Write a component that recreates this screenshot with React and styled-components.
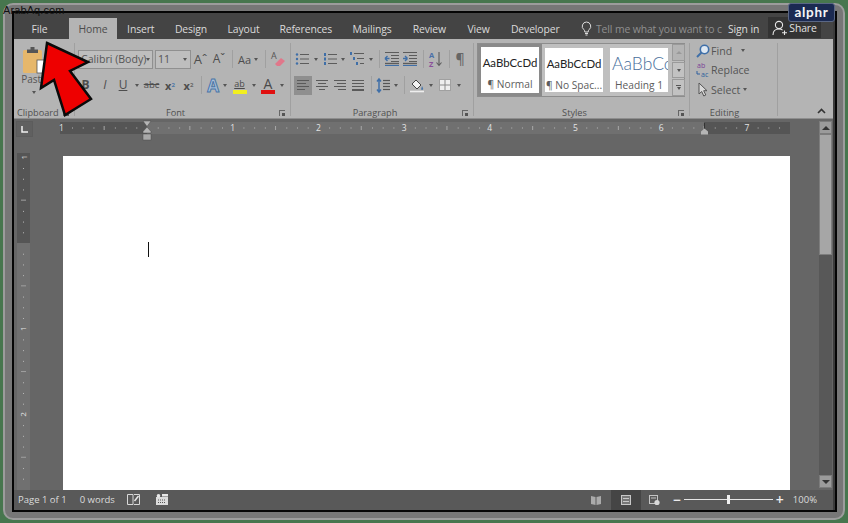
import React from "react";
import styled, { createGlobalStyle } from "styled-components";

const UI = `"Open Sans", "Noto Sans", "Liberation Sans", sans-serif`;

const Global = createGlobalStyle`
  html, body { margin: 0; padding: 0; background: #47764e; }
  #root { width: 848px; height: 523px; overflow: hidden; }
  * { box-sizing: border-box; }
`;

const Shot = styled.div`
  position: relative; width: 848px; height: 523px; padding: 3px;
  background: #47764e; font-family: ${UI}; overflow: hidden;
`;
const Bezel = styled.div`
  width: 842px; height: 517px; padding: 6px 6px 6px 7px; border: 2px solid #9c9c9c;
  border-radius: 10px; background: #777;
`;
const Win = styled.div`
  width: 825px; height: 501px; border: 2px solid #050505; padding-right: 2px;
  background: #3c3c3c; display: flex; flex-direction: column;
`;

/* ---------- tabs ---------- */
const TabBar = styled.div`
  height: 26px; flex: none; background: #444; display: flex; align-items: flex-end;
  font-size: 10.4px; letter-spacing: -.12px;
`;
const Tab = styled.div`
  width: ${p => p.$w}px; height: 21px; margin-right: ${p => p.$mr ?? 0}px; flex: none; display: flex; align-items: center;
  justify-content: center; white-space: nowrap;
  color: ${p => (p.$on ? "#4c4c4c" : "#dadada")};
  background: ${p => (p.$on ? "#b4b4b4" : "transparent")};
`;
const TellMe = styled.div`
  width: 158px; height: 21px; flex: none; display: flex; align-items: center; gap: 4px;
  padding-left: 11px; color: #8f8f8f; white-space: nowrap;
`;
const SignIn = styled.div`
  width: 40px; height: 21px; flex: none; display: flex; align-items: center;
  color: #dedede; white-space: nowrap;
`;
const ShareBox = styled.div`
  width: 53px; height: 21px; margin-bottom: 1px; padding-top: 1px; flex: none; background: #333; display: flex; align-items: center;
  justify-content: center; gap: 1px; color: #e2e2e2;
`;

/* ---------- ribbon ---------- */
const Ribbon = styled.div`
  height: 80px; flex: none; background: #b4b4b4; display: flex;
  border-bottom: 1px solid #8e8e8e; position: relative;
`;
const Group = styled.section`
  width: ${p => p.$w}px; flex: none; margin: 4px 0 2px; display: flex; flex-direction: column;
  border-right: 1px solid #a0a0a0;
`;
const GroupBody = styled.div`
  height: 63px; flex: none; padding-top: ${p => p.$top ?? 7}px; display: flex; flex-direction: column;
  gap: ${p => p.$gap ?? 8}px;
`;
const GroupFoot = styled.div`
  flex: 1; display: grid; grid-template-columns: ${p => p.$clip ? "auto 1fr auto" : "1fr auto 1fr"}; align-items: center;
  font-size: 9.2px; color: #505050; padding: 0 5px 0 3px; white-space: nowrap;
`;
const FootLabel = styled.span` margin-right: ${p => p.$mr ?? 12}px; `;
const Launcher = styled.span`
  justify-self: end; width: 6px; height: 6px; border: 1px solid #666; border-width: 1px 0 0 1px;
  position: relative;
  &::after { content: ""; position: absolute; right: 0; bottom: 0; width: 3px; height: 3px; background: #555; }
`;
const Row = styled.div`
  height: 18px; display: flex; align-items: center; padding-left: ${p => p.$pad ?? 0}px; color: #555;
`;
const Cell = styled.span`
  width: ${p => p.$w}px; height: ${p => p.$h ?? 19}px; flex: none; display: flex; align-items: center;
  justify-content: center; font-size: ${p => p.$fs ?? 12}px; line-height: 1; color: #4d4d4d;
  font-weight: ${p => p.$fw ?? 400}; font-style: ${p => p.$it ? "italic" : "normal"};
  text-decoration: ${p => p.$deco ?? "none"};
  background: ${p => p.$on ? "#8f8f8f" : "transparent"};
`;
const Sep = styled.span`
  width: ${p => p.$w}px; height: 18px; flex: none; display: flex; justify-content: center;
  &::after { content: ""; width: 1px; height: 100%; background: #a0a0a0; }
`;
const Caret = styled.i`
  display: block; flex: none; width: 0; height: 0; border-left: 2.5px solid transparent; border-right: 2.5px solid transparent;
  border-top: 3px solid ${p => p.$c ?? "#555"};
`;
const Combo = styled.div`
  width: ${p => p.$w}px; height: 19px; margin-right: ${p => p.$mr ?? 0}px; flex: none; border: 1px solid #909090; background: #bebebe;
  display: flex; align-items: center; justify-content: space-between; padding: 0 3px 0 2px;
  color: #555; font-size: 10.6px; white-space: nowrap; overflow: hidden;
`;
const Script = styled.sub`
  font-size: 6px; color: ${p => p.$c ?? "#666"}; vertical-align: ${p => p.$up ? "6px" : "-3px"};
`;
const BarLetter = styled.span`
  display: flex; flex-direction: column; align-items: center; gap: 0; font-size: 14px; line-height: 13px; color: #4a4a4a;
  &::after { content: ""; width: 14px; height: 4px; background: ${p => p.$c}; }
`;
const AbLetter = styled(BarLetter)`
  font-size: 9px; line-height: 13px; text-decoration: underline;
`;
const Effects = styled.span`
  font-size: 17px; font-weight: 700; line-height: 1; color: #a8bfd8; -webkit-text-stroke: 1px #4b77a8;
`;

/* paste */
const PasteCol = styled.div`
  width: 40px; padding-top: 2px; display: flex; flex-direction: column; align-items: center;
  color: #555; font-size: 10px; line-height: 13px;
`;
const PasteCaret = styled(Caret)` margin-top: 5px; `;
const SmallTools = styled.div`
  width: 6px; height: 8px; margin: 44px 0 0 4px; background: #d6a860;
`;
const ClipRow = styled.div` display: flex; `;

/* styles gallery */
const Gallery = styled.div`
  width: 208px; height: 54px; margin-left: 3px; border: 1px solid #8d8d8d; background: #bfbfbf;
  display: flex; align-items: center;
`;
const Tile = styled.div`
  width: ${p => p.$sel ? 64 : 58}px; height: ${p => p.$sel ? 52 : 44}px; flex: none;
  margin-left: ${p => p.$ml}px; background: #fff; border: ${p => p.$sel ? "3px solid #8a8a8a" : "none"};
  display: flex; flex-direction: column; align-items: center; overflow: hidden;
`;
const TileSample = styled.div`
  height: 29px; width: 100%; padding-top: 2px; display: flex; align-items: center; justify-content: ${p => p.$head ? "flex-start" : "center"};
  padding-left: ${p => p.$head ? "2px" : 0}; overflow: hidden; white-space: nowrap;
  font-family: Lato, "Liberation Sans", sans-serif; font-size: ${p => p.$head ? "17.5px" : "11.4px"};
  font-weight: ${p => p.$head ? 300 : 400};
  color: ${p => p.$head ? "#4a6f9c" : "#222"};
`;
const TileName = styled.div`
  font-size: 10.2px; line-height: 14px; color: #5c5c5c; white-space: nowrap; padding-top: 1px;
`;
const GalleryArrows = styled.div`
  width: 13px; height: 52px; margin-left: 4px; flex: none; display: flex; flex-direction: column; gap: 1px;
`;
const ArrowBtn = styled.div`
  flex: 1; border: 1px solid #9a9a9a; background: ${p => p.$off ? "#b4b4b4" : "#c2c2c2"};
  display: flex; align-items: center; justify-content: center; flex-direction: column; gap: 1px;
`;
const DashCaret = styled.i` display: block; width: 5px; height: 1px; background: #555; `;
const FadedUp = styled.i`
  display: block; width: 0; height: 0; border-left: 3px solid transparent; border-right: 3px solid transparent;
  border-bottom: 3px solid #999;
`;

/* editing */
const EditList = styled.div`
  display: flex; flex-direction: column; padding: 0 0 0 5px; gap: 4.5px;
`;
const EditRow = styled.div`
  height: 15px; display: flex; align-items: center; font-size: 10.6px; color: #555; white-space: nowrap;
`;
const EditIcon = styled.span` width: 16px; flex: none; display: flex; justify-content: center; `;
const EditCaret = styled.span` margin-left: ${p => p.$ml}px; `;
const Collapse = styled.span`
  position: absolute; right: 7px; bottom: 4px; display: block;
`;

/* ---------- document ---------- */
const Body = styled.div`
  height: 371px; flex: none; display: flex; background: #666;
`;
const Main = styled.div` width: 804px; flex: none; display: flex; flex-direction: column; `;
const RulerRow = styled.div`
  height: 34px; flex: none; display: flex; align-items: flex-start; padding: 2px 0 0 2px;
`;
const Corner = styled.div`
  width: 17px; height: 16px; flex: none; border: 1px solid #5c5c5c; background: #606060;
  display: flex; align-items: center; justify-content: center;
`;
const HRuler = styled.div`
  position: relative; width: 730px; height: 12px; margin: 1px 0 0 27px; flex: none; display: flex;
`;
const RulerPart = styled.div`
  width: ${p => p.$w}px; flex: none; background: ${p => p.$on ? "#707070" : "#555"};
`;
const RulerArt = styled.svg`
  position: absolute; left: 0; top: 0; overflow: visible; pointer-events: none;
`;
const Workspace = styled.div`
  flex: 1; display: flex; align-items: flex-start; padding-left: 3px; min-height: 0;
`;
const VRuler = styled.div`
  position: relative; width: 13px; height: 337px; flex: none; display: flex; flex-direction: column;
`;
const VPart = styled.div`
  height: ${p => p.$h}px; flex: none; background: ${p => p.$on ? "#707070" : "#555"};
`;
const Page = styled.div`
  width: 727px; height: 334px; margin: 3px 0 0 33px; flex: none; background: #fff; padding: 86px 0 0 85px;
`;
const TextCursor = styled.div` width: 1px; height: 15px; background: #111; `;
const ScrollBar = styled.div`
  width: 15px; flex: none; padding: 2px 1px; display: flex; flex-direction: column;
`;
const ScrollBtn = styled.div`
  height: 13px; flex: none; background: #9b9b9b; border: 1px solid #7c7c7c; display: flex; align-items: center; justify-content: center;
`;
const Thumb = styled.div`
  height: 121px; flex: none; background: #a6a6a6; border: 1px solid #7d7d7d;
`;
const Track = styled.div` flex: 1; background: #585858; `;
const UpCaret = styled.i`
  display: block; width: 0; height: 0; border-left: 4px solid transparent; border-right: 4px solid transparent;
  border-bottom: 4px solid #333;
`;
const DownCaret = styled.i`
  display: block; width: 0; height: 0; border-left: 4px solid transparent; border-right: 4px solid transparent;
  border-top: 4px solid #333;
`;

/* ---------- status ---------- */
const Status = styled.div`
  height: 20px; flex: none; background: #595959; display: flex; align-items: center; color: #dcdcdc;
  font-size: 9.5px; white-space: nowrap; padding-bottom: 1px;
`;
const StatusText = styled.span` margin-left: ${p => p.$ml}px; margin-right: ${p => p.$mr ?? 0}px; `;
const StatusIcon = styled.span`
  margin-left: ${p => p.$ml}px; display: flex; align-items: center;
`;
const Spacer = styled.div` flex: 1; `;
const ViewActive = styled.div`
  width: 30px; height: 20px; margin-left: 10px; background: #454545; display: flex; align-items: center; justify-content: center;
`;
const Zoomer = styled.div`
  width: 89px; height: 1px; margin-left: 3px; background: #e4e4e4; display: flex; align-items: center; justify-content: center;
`;
const ZoomKnob = styled.i` display: block; flex: none; width: 3px; height: 9px; background: #f0f0f0; `;
const ZoomSign = styled.span`
  margin-left: ${p => p.$ml}px; font-size: 14px; line-height: 1; color: #f0f0f0; font-weight: 600;
`;

/* ---------- overlays ---------- */
const Watermark = styled.div`
  position: absolute; left: 3px; top: 4px; font: 11px "Liberation Sans", sans-serif; color: #111; letter-spacing: .1px;
`;
const Badge = styled.div`
  position: absolute; left: 788px; top: 3px; width: 47px; height: 19px; border-radius: 3px; background: #1b2a52;
  border: 1px solid #5a6785; color: #f4f4f6; font: 700 13.5px/16px Lato, "Liberation Sans", sans-serif;
  text-align: center; letter-spacing: .7px;
`;
const ArrowArt = styled.svg` position: absolute; left: 0; top: 0; pointer-events: none; `;

/* ---------- drawings ---------- */
const I = ({ w = 14, h = 14, children }) => (
  <svg width={w} height={h} viewBox={`0 0 ${w} ${h}`} style={{ display: "block", overflow: "visible" }}>{children}</svg>
);
const G = "#5c5c5c", B = "#3f6fa8";
const hl = (y, x1, x2, c = G, sw = 1) => <line key={`${y}-${x1}-${x2}`} x1={x1} x2={x2} y1={y + .5} y2={y + .5} stroke={c} strokeWidth={sw} />;

const Bullets = () => <I>{[2, 6.5, 11].map(y => <g key={y}><circle cx="2" cy={y + .5} r="1.2" fill={B} />{hl(y, 5, 14)}</g>)}</I>;
const Numbers = () => <I>{[2, 6.5, 11].map(y => <g key={y}><rect x="1" y={y - 1} width="2" height="3" fill={B} />{hl(y, 5, 14)}</g>)}</I>;
const Multi = () => <I>{[[1, 0], [6, 3], [11, 6]].map(([y, x]) => <g key={y}><rect x={x} y={y - 1} width="2" height="3" fill={B} />{hl(y, x + 4, 14)}</g>)}</I>;
const Indent = ({ flip }) => (
  <I>
    {hl(0, 0, 14)}{hl(11, 0, 14, G, 1.4)}
    {[3, 6, 9].map(y => hl(y, 6, 14))}
    <path d={flip ? "M0 6.5h4.5M0 6.5l2.5-2.5M0 6.5l2.5 2.5" : "M0 6.5h4.5M4.5 6.5l-2.5-2.5M4.5 6.5l-2.5 2.5"} stroke={B} strokeWidth="1.4" fill="none" />
    {hl(13, 0, 14, B, 1)}
  </I>
);
const Sort = () => (
  <I h={16}>
    <text x="0" y="6.5" fontSize="7.5" fontFamily="Open Sans" fontWeight="700" fill="#4a6fa8">A</text>
    <text x="0" y="16" fontSize="7.5" fontFamily="Open Sans" fontWeight="700" fill="#8a4f9a">Z</text>
    <path d="M10 1v13M7.5 11.5l2.5 3 2.5-3" stroke={G} fill="none" strokeWidth="1.1" />
  </I>
);
const Pilcrow = () => <span style={{ fontSize: 14, fontWeight: 600, color: "#666", lineHeight: 1 }}>¶</span>;
const Align = ({ kind }) => {
  const rows = { l: [[1, 13], [1, 10], [1, 13], [1, 9]], c: [[1, 13], [3, 11], [1, 13], [4, 10]], r: [[1, 13], [4, 13], [1, 13], [5, 13]], j: [[1, 13], [1, 13], [1, 13], [1, 13]] }[kind];
  return <I h={11}>{rows.map(([a, b], i) => hl(i * 3, a, b, "#5a5a5a", 1))}{kind === "j" && hl(10, 1, 13, "#5a5a5a")}</I>;
};
const LineSpace = () => (
  <I h={15}>
    <path d="M3 1v13M1 3.5 3 1l2 2.5M1 11.5 3 14l2-2.5" stroke={B} strokeWidth="1.5" fill="none" />
    {[2, 5, 8, 11].map(y => hl(y, 7, 14, "#555", 1.2))}
  </I>
);
const Shading = () => (
  <I h={15}>
    <path d="M2 6 6 2l5 5-4 4z" fill="#f2f2f2" stroke="#444" strokeWidth="1" />
    <path d="M12 8c1 2 1.5 2.5 1 3.5-.6.8-2 .4-1.8-.8z" fill="#4b77a8" />
    {hl(13, 0, 14, "#eee", 1.6)}
  </I>
);
const Borders = () => (
  <I w={12} h={12}><rect width="12" height="12" fill="#eee" /><path d="M6 0v12M0 6h12" stroke="#8a8a8a" strokeWidth="1" /><rect x=".5" y=".5" width="11" height="11" fill="none" stroke="#a0a0a0" /></I>
);
const Eraser = () => (
  <I w={14} h={16}>
    <text x="0" y="8" fontSize="9" fontFamily="Open Sans" fill="#555">A</text>
    <path d="M4 13 10 7l4 3-5 5H6z" fill="#e0778a" />
  </I>
);
const Find = () => <I><circle cx="8.5" cy="5.5" r="4.2" fill="#dfe8f2" stroke="#3f6fa8" strokeWidth="1.6" /><path d="M5.5 8.5 1 13" stroke="#3f6fa8" strokeWidth="2" /></I>;
const Replace = () => (
  <I>
    <text x="1" y="5" fontSize="7" fontFamily="Open Sans" fill="#7b3f98">ab</text>
    <text x="5" y="14" fontSize="7" fontFamily="Open Sans" fill="#2e5f9e">ac</text>
    <path d="M1 8v3h3" stroke="#2e5f9e" fill="none" />
  </I>
);
const Pointer = () => <I><path d="M3 0v11l2.7-2.5L7.8 13l2-1-2.1-4.3H11z" fill="#d9d9d9" stroke="#555" strokeWidth="1" /></I>;
const Paste = () => (
  <I w={26} h={27}>
    <rect x="2" y="4" width="19" height="23" rx="1.5" fill="#e6b76b" />
    <path d="M6 7V3.5h3.5V1h4v2.5H17V7z" fill="#555" />
    <rect x="16" y="14" width="10" height="13" fill="#fff" stroke="#555" strokeWidth=".8" />
  </I>
);
const Bulb = () => <I w={11} h={15}><path d="M5.5 1a4.3 4.3 0 0 0-2.6 7.7c.7.6.9 1.3.9 2.3h3.4c0-1 .2-1.7.9-2.3A4.3 4.3 0 0 0 5.5 1z" fill="none" stroke="#dcdcdc" /><path d="M4 12.5h3M4.5 14h2" stroke="#dcdcdc" /></I>;
const Person = () => <I w={16} h={16}><circle cx="7" cy="5" r="3.6" fill="none" stroke="#e6e6e6" strokeWidth="1.1" /><path d="M1 15c0-4 2.5-6 6-6 1.5 0 2.7.4 3.6 1.1" fill="none" stroke="#e6e6e6" strokeWidth="1.1" /><path d="M12.5 10.5v4.5M10 12.8h5" stroke="#e6e6e6" strokeWidth="1.1" /></I>;
const Up = () => <I w={9} h={6}><path d="M1 5 4.5 1.5 8 5" fill="none" stroke="#333" strokeWidth="1.6" /></I>;
const CornerL = () => <I w={7} h={7}><path d="M1 0v6h6" fill="none" stroke="#f0f0f0" strokeWidth="1.5" /></I>;
const ReadMode = () => <I w={13} h={11}><path d="M.5 .5h5.5v10H.5zM7 .5h5.5v10H7" fill="none" stroke="#d8d8d8" /><path d="M7.5 7 11.5 2" stroke="#e8e8e8" strokeWidth="1.5" /></I>;
const Cal = () => <I w={12} h={11}><rect y="3" width="12" height="8" fill="#dcdcdc" /><circle cx="2.5" cy="1.8" r="1.8" fill="#e8e8e8" /><rect x="6" width="6" height="2.5" fill="#e8e8e8" /><path d="M2 6h8M2 8.5h8" stroke="#555" strokeDasharray="1 1" /></I>;
const Book = () => <I w={10} h={10}><path d="M0 1l4.5 1v8L0 9zM10 1 5.5 2v8l4.5-1z" fill="#aaa" /></I>;
const PrintV = () => <I w={10} h={10}><rect x=".5" y=".5" width="9" height="9" fill="#777" stroke="#c8c8c8" /><path d="M2 3.5h6M2 6.5h6" stroke="#c8c8c8" /></I>;
const WebV = () => <I w={11} h={10}><rect x=".5" y=".5" width="8" height="8" fill="none" stroke="#c4c4c4" /><path d="M2 3h5" stroke="#c4c4c4" /><circle cx="8" cy="7.5" r="2.6" fill="#d8d8d8" /></I>;

const RULER_O = 87, STEP = 85.7 / 8;
const rulerTicks = [];
for (let i = -8; i * STEP + RULER_O < 729; i++) rulerTicks.push(i);

const RulerMarks = () => (
  <RulerArt width="730" height="12">
    {rulerTicks.map(i => {
      const x = RULER_O + i * STEP;
      if (i === 0) return null;
      if (i % 8 === 0) return <text key={i} x={x} y="9" textAnchor="middle" fontSize="8.5" fontFamily="Open Sans" fill="#e4e4e4">{Math.abs(i / 8)}</text>;
      if (i % 4 === 0) return <line key={i} x1={x} x2={x} y1="4" y2="8" stroke="#a8a8a8" />;
      return <rect key={i} x={x} y="5.5" width="1" height="1" fill="#b8b8b8" />;
    })}
    <path d="M83 -1h8l-4 5.5zM83 11v-1.5l4-4.5 4 4.5V11z" fill="#b5b5b5" stroke="#4c4c4c" strokeWidth=".5" />
    <rect x="83" y="12" width="8" height="6" fill="#a9a9a9" stroke="#4c4c4c" strokeWidth=".5" />
    <path d="M644.5 1v7" stroke="#333" />
    <path d="M641 12.5v-3l3.5-3 3.5 3v3z" fill="#b5b5b5" />
  </RulerArt>
);
const V_O = 90;
const vTicks = [];
for (let i = -8; i * STEP + V_O < 336; i++) vTicks.push(i);
const VMarks = () => (
  <RulerArt width="13" height="337">
    {vTicks.map(i => {
      const y = V_O + i * STEP;
      if (i === 0) return null;
      if (i % 8 === 0) return <text key={i} x="6.5" y={y} textAnchor="middle" fontSize="8" fontFamily="Open Sans" fill="#e4e4e4" transform={`rotate(-90 6.5 ${y}) translate(0 3)`}>{Math.abs(i / 8)}</text>;
      if (i % 4 === 0) return <line key={i} x1="4" x2="9" y1={y} y2={y} stroke="#a0a0a0" />;
      return <rect key={i} x="6" y={y} width="1" height="1" fill="#b8b8b8" />;
    })}
  </RulerArt>
);

const TABS = [["File", 51, false, 4], ["Home", 48, true], ["Insert", 47.5], ["Design", 53], ["Layout", 52], ["References", 72.5], ["Mailings", 60], ["Review", 54.5], ["View", 44], ["Developer", 69.5]];

const StyleTile = ({ sample, name, head, sel, ml }) => (
  <Tile $sel={sel} $ml={ml}>
    <TileSample $head={head}>{sample}</TileSample>
    <TileName>{name}</TileName>
  </Tile>
);

export default function App() {
  return (
    <Shot>
      <Global />
      <Bezel>
        <Win>
          <TabBar>
            {TABS.map(([t, w, on, mr]) => <Tab key={t} $w={w} $on={on} $mr={mr}>{t}</Tab>)}
            <TellMe><Bulb /><span>Tell me what you want to c</span></TellMe>
            <SignIn>Sign in</SignIn>
            <ShareBox><Person />Share</ShareBox>
          </TabBar>

          <Ribbon>
            <Group $w={61}>
              <GroupBody $top={1} $gap={0}>
                <ClipRow>
                  <PasteCol><Paste /><span>Paste</span><PasteCaret /></PasteCol>
                  <SmallTools />
                </ClipRow>
              </GroupBody>
              <GroupFoot $clip><span>Clipboard</span><i /><Launcher /></GroupFoot>
            </Group>

            <Group $w={216}>
              <GroupBody>
                <Row $pad={3}>
                  <Combo $w={75} $mr={2}><span>Calibri (Body)</span><Caret /></Combo>
                  <Combo $w={36}><span>11</span><Caret /></Combo>
                  <Cell $w={19} $fs={13}>Aˆ</Cell>
                  <Cell $w={18} $fs={12}>Aˇ</Cell>
                  <Sep $w={8} />
                  <Cell $w={24} $fs={11}>Aa&nbsp;<Caret /></Cell>
                  <Sep $w={10} />
                  <Cell $w={16}><Eraser /></Cell>
                </Row>
                <Row $pad={1}>
                  <Cell $w={19} $fw={700}>B</Cell>
                  <Cell $w={20} $it>I</Cell>
                  <Cell $w={16} $deco="underline">U</Cell>
                  <Cell $w={12}><Caret /></Cell>
                  <Cell $w={17} $fs={9.5} $deco="line-through">abc</Cell>
                  <Cell $w={20} $fw={700} $fs={11}>x<Script $c="#4b77a8">2</Script></Cell>
                  <Cell $w={17} $fw={700} $fs={11}>x<Script $up>2</Script></Cell>
                  <Sep $w={8} />
                  <Cell $w={16}><Effects>A</Effects></Cell>
                  <Cell $w={8}><Caret /></Cell>
                  <Cell $w={21}><AbLetter $c="#f2ef1f">ab</AbLetter></Cell>
                  <Cell $w={8}><Caret /></Cell>
                  <Cell $w={20}><BarLetter $c="#e01010">A</BarLetter></Cell>
                  <Cell $w={8}><Caret /></Cell>
                </Row>
              </GroupBody>
              <GroupFoot><i /><FootLabel>Font</FootLabel><Launcher /></GroupFoot>
            </Group>

            <Group $w={183}>
              <GroupBody>
                <Row $pad={2}>
                  <Cell $w={18}><Bullets /></Cell><Cell $w={10}><Caret /></Cell>
                  <Cell $w={18}><Numbers /></Cell><Cell $w={8}><Caret /></Cell>
                  <Cell $w={20}><Multi /></Cell><Cell $w={8}><Caret /></Cell>
                  <Sep $w={8} />
                  <Cell $w={18}><Indent flip /></Cell><Cell $w={18}><Indent /></Cell>
                  <Sep $w={8} />
                  <Cell $w={18}><Sort /></Cell>
                  <Sep $w={8} />
                  <Cell $w={14}><Pilcrow /></Cell>
                </Row>
                <Row $pad={3}>
                  <Cell $w={18} $on><Align kind="l" /></Cell>
                  <Cell $w={19}><Align kind="c" /></Cell>
                  <Cell $w={18}><Align kind="r" /></Cell>
                  <Cell $w={18}><Align kind="j" /></Cell>
                  <Sep $w={8} />
                  <Cell $w={16}><LineSpace /></Cell><Cell $w={9}><Caret /></Cell>
                  <Sep $w={8} />
                  <Cell $w={18}><Shading /></Cell><Cell $w={10}><Caret /></Cell>
                  <Cell $w={18}><Borders /></Cell><Cell $w={10}><Caret /></Cell>
                </Row>
              </GroupBody>
              <GroupFoot><i /><FootLabel>Paragraph</FootLabel><Launcher /></GroupFoot>
            </Group>

            <Group $w={216}>
              <GroupBody $top={0}>
                <Gallery>
                  <StyleTile sel ml={0} sample="AaBbCcDd" name="¶ Normal" />
                  <StyleTile ml={3} sample="AaBbCcDd" name="¶ No Spac..." />
                  <StyleTile ml={7} head sample="AaBbCc" name="Heading 1" />
                  <GalleryArrows>
                    <ArrowBtn $off><FadedUp /></ArrowBtn>
                    <ArrowBtn><Caret /></ArrowBtn>
                    <ArrowBtn><DashCaret /><Caret /></ArrowBtn>
                  </GalleryArrows>
                </Gallery>
              </GroupBody>
              <GroupFoot><i /><FootLabel>Styles</FootLabel><Launcher /></GroupFoot>
            </Group>

            <Group $w={88}>
              <GroupBody $top={0} $gap={0}>
                <EditList>
                  <EditRow><EditIcon><Find /></EditIcon>Find<EditCaret $ml={9}><Caret /></EditCaret></EditRow>
                  <EditRow><EditIcon><Replace /></EditIcon>Replace</EditRow>
                  <EditRow><EditIcon><Pointer /></EditIcon>Select<EditCaret $ml={3}><Caret /></EditCaret></EditRow>
                </EditList>
              </GroupBody>
              <GroupFoot><i /><FootLabel $mr={16}>Editing</FootLabel><i /></GroupFoot>
            </Group>
            <Collapse><Up /></Collapse>
          </Ribbon>

          <Body>
            <Main>
              <RulerRow>
                <Corner><CornerL /></Corner>
                <HRuler>
                  <RulerPart $w={87} /><RulerPart $w={557} $on /><RulerPart $w={86} />
                  <RulerMarks />
                </HRuler>
              </RulerRow>
              <Workspace>
                <VRuler>
                  <VPart $h={90} /><VPart $h={247} $on />
                  <VMarks />
                </VRuler>
                <Page><TextCursor /></Page>
              </Workspace>
            </Main>
            <ScrollBar>
              <ScrollBtn><UpCaret /></ScrollBtn>
              <Thumb />
              <Track />
              <ScrollBtn><DownCaret /></ScrollBtn>
            </ScrollBar>
          </Body>

          <Status>
            <StatusText $ml={4}>Page 1 of 1</StatusText>
            <StatusText $ml={13}>0 words</StatusText>
            <StatusIcon $ml={12}><ReadMode /></StatusIcon>
            <StatusIcon $ml={16}><Cal /></StatusIcon>
            <Spacer />
            <StatusIcon $ml={0}><Book /></StatusIcon>
            <ViewActive><PrintV /></ViewActive>
            <StatusIcon $ml={8}><WebV /></StatusIcon>
            <ZoomSign $ml={13}>−</ZoomSign>
            <Zoomer><ZoomKnob /></Zoomer>
            <ZoomSign $ml={3}>+</ZoomSign>
            <StatusText $ml={9} $mr={16}>100%</StatusText>
          </Status>
        </Win>
      </Bezel>

      <Watermark>ArabAq.com</Watermark>
      <Badge>alphr</Badge>
      <ArrowArt width="848" height="523">
        <path d="M47 43 88 62 70 71 91 99 65 115 54 80 41 88z" fill="#ee0000" stroke="#0a0a0a" strokeWidth="2.5" strokeLinejoin="miter" />
      </ArrowArt>
    </Shot>
  );
}
